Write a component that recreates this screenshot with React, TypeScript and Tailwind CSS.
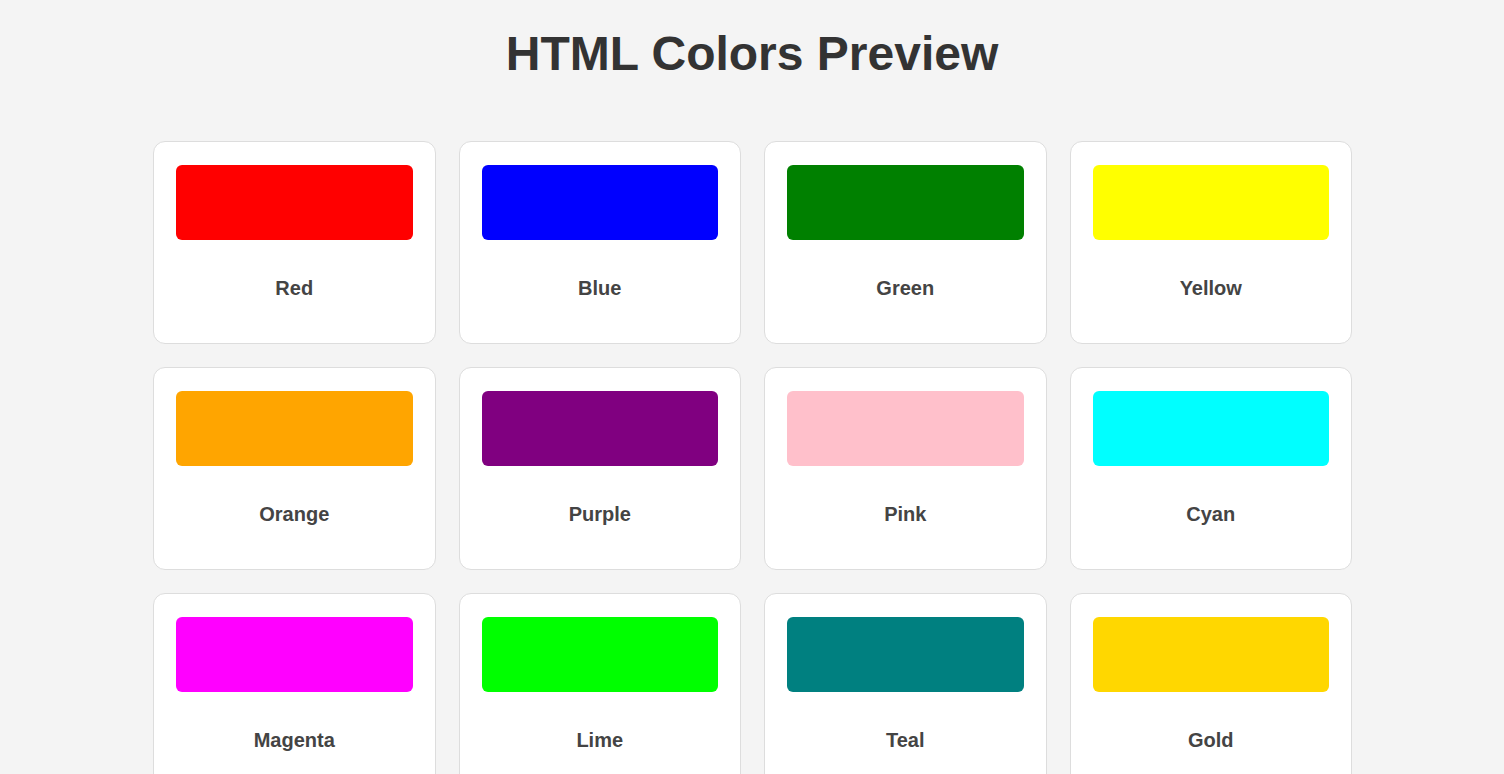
const colors = [
  { name: "Red", hex: "#ff0000" },
  { name: "Blue", hex: "#0000ff" },
  { name: "Green", hex: "#008000" },
  { name: "Yellow", hex: "#ffff00" },
  { name: "Orange", hex: "#ffa500" },
  { name: "Purple", hex: "#800080" },
  { name: "Pink", hex: "#ffc0cb" },
  { name: "Cyan", hex: "#00ffff" },
  { name: "Magenta", hex: "#ff00ff" },
  { name: "Lime", hex: "#00ff00" },
  { name: "Teal", hex: "#008080" },
  { name: "Gold", hex: "#ffd700" },
];

export default function App() {
  return (
    <div
      className="min-h-screen bg-[#f4f4f4] pb-10"
      style={{ fontFamily: '"Liberation Sans", Arial, sans-serif' }}
    >
      <h1 className="pt-[30px] text-center text-5xl leading-[48px] font-bold text-[#333]">
        HTML Colors Preview
      </h1>

      <div className="mx-auto mt-[63px] grid w-[1200px] grid-cols-4 gap-x-[23px] gap-y-[23px] pl-px">
        {colors.map((color) => (
          <div
            key={color.name}
            className="flex flex-col rounded-xl border border-[#dddddd] bg-white px-[22px] pt-[23px] pb-[43px]"
          >
            <div
              className="h-[75px] w-full rounded-md"
              style={{ backgroundColor: color.hex }}
            />
            <div className="mt-[36px] text-center text-xl leading-6 font-bold text-[#444]">
              {color.name}
            </div>
          </div>
        ))}
      </div>
    </div>
  );
}
